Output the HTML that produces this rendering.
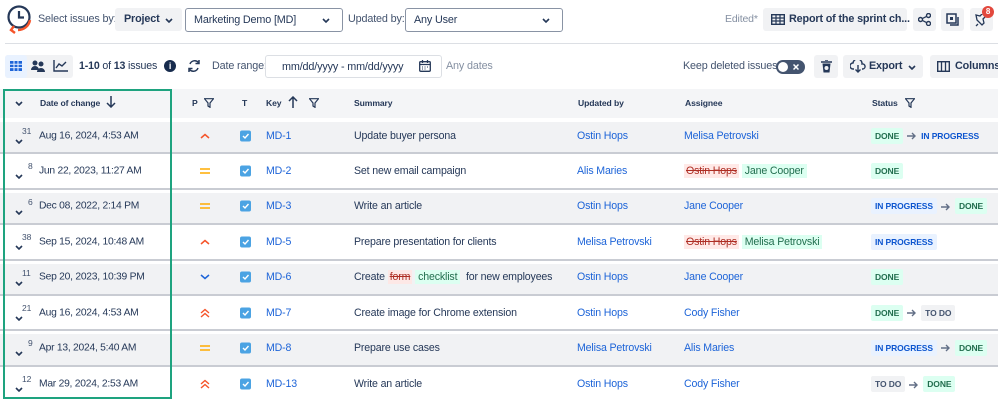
<!DOCTYPE html>
<html><head><meta charset="utf-8"><style>
*{box-sizing:border-box;margin:0;padding:0}
body{width:998px;height:400px;overflow:hidden;background:#fff;font-family:"Liberation Sans",Arial,sans-serif;font-size:10.5px;color:#253858;position:relative;letter-spacing:-0.15px}
.a{position:absolute;white-space:nowrap}
.btn{position:absolute;background:#f1f2f4;border-radius:3px}
.sel{position:absolute;border:1px solid #8993a4;border-radius:3px;background:#fff;padding:0 8px;line-height:22px;font-size:10.8px}
.sel svg,.btn svg.c{position:absolute}
.row{position:absolute;left:0;width:998px;height:35.4px;border-bottom:2px solid #c9ccd3}
.row .in{position:absolute;left:0;right:0;top:3px;bottom:0}
.g .in{background:#f1f2f4}
.row .a{top:50%;transform:translateY(-50%);font-size:10.6px}
.row .d{font-size:10.3px;letter-spacing:-0.25px}
.lnk{color:#1d64d8}
.lz{position:absolute;font-size:8.5px;color:#42526e}
.row .lz{top:7px;transform:none;font-size:8.5px}
.st{display:inline-block;font-size:8.5px;font-weight:bold;padding:3px 4px;border-radius:2px;letter-spacing:-0.1px}
.dn{background:#dcfff1;color:#216e4e}.ip{background:#e9f2ff;color:#0c55cf}.td{background:#f1f2f4;color:#44546f}
.arr{display:inline-block;margin:0 4px;vertical-align:middle}
.del{background:#ffe9e7;color:#ae2e24;text-decoration:line-through;padding:1px 2px}
.add{background:#dcfff1;color:#216e4e;padding:1px 3px}
.h{position:absolute;font-weight:bold;font-size:8.6px;color:#253858;top:98px;letter-spacing:-0.1px}
.cv{position:absolute}
.row .cv{top:20px}
</style></head><body>
<svg width="0" height="0" style="position:absolute"><defs>
<symbol id="cv" viewBox="0 0 8 5"><path d="M1 1l3 3 3-3" stroke="#253858" stroke-width="1.6" fill="none"/></symbol>
<symbol id="ar" viewBox="0 0 10 8"><path d="M0 4h8M5 1l3 3-3 3" stroke="#626f86" stroke-width="1.4" fill="none"/></symbol>
<symbol id="fl" viewBox="0 0 10 10"><path d="M.5 .7h9L6 5v4.3L4 8V5z" fill="none" stroke="#253858" stroke-width="1.2"/></symbol>
<symbol id="ck" viewBox="0 0 11 11"><rect width="11" height="11" rx="2" fill="#4ba3e3"/><path d="M3 5.5l2 2 3.5-4" stroke="#fff" stroke-width="1.4" fill="none"/></symbol>
<symbol id="hi" viewBox="0 0 10 6"><path d="M1 5l4-3.5L9 5" stroke="#f5542a" stroke-width="1.5" fill="none"/></symbol>
<symbol id="hh" viewBox="0 0 10 9"><path d="M1 4.5l4-3.5 4 3.5M1 8.5l4-3.5 4 3.5" stroke="#f5542a" stroke-width="1.4" fill="none"/></symbol>
<symbol id="md" viewBox="0 0 10 6"><path d="M0 1h10M0 5h10" stroke="#ffab00" stroke-width="1.6"/></symbol>
<symbol id="lo" viewBox="0 0 10 6"><path d="M1 1l4 3.5L9 1" stroke="#1d64d8" stroke-width="1.5" fill="none"/></symbol>
</defs></svg>
<!-- logo -->
<svg class="a" style="left:5px;top:4px" width="30" height="32" viewBox="0 0 30 32"><circle cx="14" cy="13" r="10.5" fill="none" stroke="#253858" stroke-width="2.2"/><path d="M14 7v6.5h5" fill="none" stroke="#253858" stroke-width="2.2"/><path d="M25 16c-1 6-6 10-12 10" fill="none" stroke="#f5542a" stroke-width="2.4"/><path d="M9 22l-3 4 4 3" fill="none" stroke="#f5542a" stroke-width="2.4"/></svg>
<div class="a" style="left:38px;top:13px;font-size:10.8px;color:#44546f">Select issues by:</div>
<div class="btn" style="left:115px;top:8px;width:67px;height:23px"><span class="a" style="left:9px;top:5px;font-weight:bold;font-size:10.8px">Project</span><svg class="cv" style="left:50px;top:10px" width="8" height="5"><use href="#cv"/></svg></div>
<div class="sel" style="left:185px;top:8px;width:158px;height:24px">Marketing Demo [MD]<svg style="right:12px;top:9px" width="8" height="5"><use href="#cv"/></svg></div>
<div class="a" style="left:348px;top:13px;font-size:10.8px;color:#44546f">Updated by:</div>
<div class="sel" style="left:405px;top:8px;width:158px;height:24px">Any User<svg style="right:12px;top:9px" width="8" height="5"><use href="#cv"/></svg></div>
<div class="a" style="left:725px;top:13px;font-size:10.5px;color:#8590a2">Edited*</div>
<div class="btn" style="left:763px;top:8px;width:144px;height:23px"><svg class="a" style="left:8px;top:6px" width="14" height="11"><rect x=".7" y=".7" width="12.6" height="9.6" fill="none" stroke="#253858" stroke-width="1.4"/><path d="M0 4h14M0 7h14M5 0v11M9 0v11" stroke="#253858" stroke-width="1.2"/></svg><span class="a" style="left:26px;top:5px;font-size:10.8px;font-weight:bold">Report of the sprint ch...</span></div>
<div class="btn" style="left:913px;top:8px;width:23px;height:23px"><svg class="a" style="left:5px;top:5px" width="13" height="13"><circle cx="10.5" cy="2.5" r="2" fill="none" stroke="#253858" stroke-width="1.4"/><circle cx="2.5" cy="6.5" r="2" fill="none" stroke="#253858" stroke-width="1.4"/><circle cx="10.5" cy="10.5" r="2" fill="none" stroke="#253858" stroke-width="1.4"/><path d="M4.3 5.6l4.5-2.3M4.3 7.4l4.5 2.3" stroke="#253858" stroke-width="1.3"/></svg></div>
<div class="btn" style="left:941px;top:8px;width:23px;height:23px"><svg class="a" style="left:5px;top:5px" width="13" height="13"><rect x="1" y="1" width="9" height="9" fill="none" stroke="#253858" stroke-width="1.5"/><path d="M12 4v8H4" fill="none" stroke="#253858" stroke-width="1.5"/><rect x="4" y="4" width="3" height="3" fill="#253858"/></svg></div>
<div class="btn" style="left:970px;top:8px;width:23px;height:23px"><svg class="a" style="left:5px;top:6px" width="13" height="13"><path d="M3 10l-2 2M2 6l5 5 2-2-1-4 3-3-3-3-3 3-4-1z" fill="none" stroke="#253858" stroke-width="1.3"/></svg><span class="a" style="left:12px;top:-2px;width:12px;height:12px;border-radius:6px;background:#e2483d;color:#fff;font-size:8px;font-weight:bold;text-align:center;line-height:12px">8</span></div>
<div class="a" style="left:5px;top:43px;width:993px;height:1px;background:#dcdfe4"></div>
<!-- toolbar -->
<div class="btn" style="left:5px;top:55px;width:68px;height:23px"></div>
<div class="a" style="left:5px;top:55px;width:22px;height:23px;background:#e9f2ff;border-radius:3px"></div>
<svg class="a" style="left:10px;top:61px" width="12" height="10"><rect width="12" height="10" fill="#1d64d8"/><path d="M0 3.3h12M0 6.6h12M4 0v10M8 0v10" stroke="#e9f2ff" stroke-width="1"/></svg>
<svg class="a" style="left:31px;top:60px" width="14" height="12"><circle cx="4" cy="3" r="2.5" fill="#253858"/><circle cx="10" cy="4" r="2.5" fill="#253858"/><path d="M0 10a4 4 0 0 1 8 0zM6 12a4 4 0 0 1 8 0z" fill="#253858"/></svg>
<svg class="a" style="left:53px;top:60px" width="15" height="12"><path d="M1 0v11h14" fill="none" stroke="#253858" stroke-width="1.4"/><path d="M3 8l3-4 3 2 4-4" fill="none" stroke="#253858" stroke-width="1.4"/></svg>
<div class="a" style="left:79px;top:60px;font-size:10.6px"><b>1-10</b> of <b>13</b> issues</div>
<div class="a" style="left:164px;top:60px;width:12px;height:12px;border-radius:6px;background:#172b4d;color:#fff;font-size:9px;font-weight:bold;text-align:center;line-height:12px">i</div>
<svg class="a" style="left:187px;top:59px" width="14" height="14"><path d="M3 5a5 5 0 0 1 8.5-1.5M11 9a5 5 0 0 1-8.5 1.5" fill="none" stroke="#253858" stroke-width="1.5"/><path d="M12 1v3.5H8.5M2 13V9.5h3.5" fill="none" stroke="#253858" stroke-width="1.5"/></svg>
<div class="a" style="left:212px;top:60px;font-size:10.8px;color:#44546f">Date range:</div>
<div class="a" style="left:265px;top:55px;width:177px;height:23px;border:1px solid #dcdfe4;border-radius:3px;padding:5px 0 0 16px;font-size:10.8px">mm/dd/yyyy - mm/dd/yyyy</div>
<svg class="a" style="left:419px;top:60px" width="12" height="12"><rect x=".7" y="1.7" width="10.6" height="9.6" rx="1" fill="none" stroke="#253858" stroke-width="1.3"/><path d="M1 4.5h10M3.5 0v3M8.5 0v3" stroke="#253858" stroke-width="1.3"/><path d="M3 7h1M5.5 7h1M8 7h1M3 9h1M5.5 9h1" stroke="#253858"/></svg>
<div class="a" style="left:446px;top:60px;font-size:10.8px;color:#8590a2">Any dates</div>
<div class="a" style="left:683px;top:60px;font-size:10.8px;color:#44546f">Keep deleted issues</div>
<div class="a" style="left:776px;top:60px;width:29px;height:14px;border-radius:7px;background:#44546f"><span class="a" style="left:2px;top:2px;width:10px;height:10px;border-radius:5px;background:#fff"></span><svg class="a" style="left:17px;top:4px" width="6" height="6"><path d="M.5.5l5 5M5.5.5l-5 5" stroke="#fff" stroke-width="1.5"/></svg></div>
<div class="btn" style="left:814px;top:55px;width:24px;height:23px"><svg class="a" style="left:7px;top:5px" width="11" height="13"><path d="M0 2h11M4 0h3" stroke="#253858" stroke-width="1.5"/><path d="M1.5 3.5h8l-1 9h-6z" fill="#253858"/><circle cx="5.5" cy="8" r="2" fill="#f1f2f4"/></svg></div>
<div class="btn" style="left:843px;top:55px;width:80px;height:23px"><svg class="a" style="left:7px;top:5px" width="16" height="13"><path d="M4 9H3a3 3 0 0 1 0-6 4.5 4.5 0 0 1 9 1 2.5 2.5 0 0 1 1 5h-1" fill="none" stroke="#253858" stroke-width="1.4"/><path d="M8 5v7M5.5 9.5L8 12l2.5-2.5" fill="none" stroke="#253858" stroke-width="1.4"/></svg><span class="a" style="left:26px;top:5px;font-size:10.8px;font-weight:bold">Export</span><svg class="cv" style="left:65px;top:10px" width="8" height="5"><use href="#cv"/></svg></div>
<div class="btn" style="left:930px;top:55px;width:70px;height:23px"><svg class="a" style="left:7px;top:6px" width="13" height="11"><rect x=".7" y=".7" width="11.6" height="9.6" fill="none" stroke="#253858" stroke-width="1.4"/><path d="M4.5 0v11M8.5 0v11" stroke="#253858" stroke-width="1.3"/></svg><span class="a" style="left:25px;top:5px;font-size:10.8px;font-weight:bold">Columns</span></div>
<!-- header -->
<div class="a" style="left:0;top:89px;width:998px;height:29px;background:#f4f5f7"></div>
<svg class="cv" style="left:15px;top:101px" width="8" height="5"><use href="#cv"/></svg>
<div class="h" style="left:40px">Date of change</div>
<svg class="a" style="left:106px;top:96px" width="10" height="12"><path d="M5 0v11M1 7l4 4 4-4" stroke="#253858" stroke-width="1.5" fill="none"/></svg>
<div class="h" style="left:192px">P</div>
<svg class="a" style="left:204px;top:98px" width="10" height="10"><use href="#fl"/></svg>
<div class="h" style="left:242px">T</div>
<div class="h" style="left:266px">Key</div>
<svg class="a" style="left:288px;top:96px" width="10" height="12"><path d="M5 12V1M1 5l4-4 4 4" stroke="#253858" stroke-width="1.5" fill="none"/></svg>
<svg class="a" style="left:309px;top:98px" width="10" height="10"><use href="#fl"/></svg>
<div class="h" style="left:354px">Summary</div>
<div class="h" style="left:578px">Updated by</div>
<div class="h" style="left:685px">Assignee</div>
<div class="h" style="left:872px">Status</div>
<svg class="a" style="left:905px;top:98px" width="10" height="10"><use href="#fl"/></svg>
<!-- rows -->
<div class="row g" style="top:119px"><div class="in"></div>
<span class="lz" style="left:22px">31</span><svg class="cv" style="left:15px" width="8" height="5"><use href="#cv"/></svg>
<span class="a d" style="left:39px">Aug 16, 2024, 4:53 AM</span>
<svg class="a" style="left:200px" width="10" height="6"><use href="#hi"/></svg>
<svg class="a" style="left:240px" width="11" height="11"><use href="#ck"/></svg><span class="a lnk" style="left:266px">MD-1</span>
<span class="a" style="left:354px">Update buyer persona</span><span class="a lnk" style="left:577px">Ostin Hops</span><span class="a lnk" style="left:684px">Melisa Petrovski</span>
<span class="a" style="left:871px"><span class="st dn">DONE</span><svg class="arr" width="10" height="8"><use href="#ar"/></svg><span class="st ip" style="background:none;padding-left:0">IN PROGRESS</span></span></div>
<div class="row" style="top:154.4px"><div class="in"></div>
<span class="lz" style="left:28px">8</span><svg class="cv" style="left:15px" width="8" height="5"><use href="#cv"/></svg>
<span class="a d" style="left:39px">Jun 22, 2023, 11:27 AM</span>
<svg class="a" style="left:200px" width="10" height="6"><use href="#md"/></svg>
<svg class="a" style="left:240px" width="11" height="11"><use href="#ck"/></svg><span class="a lnk" style="left:266px">MD-2</span>
<span class="a" style="left:354px">Set new email campaign</span><span class="a lnk" style="left:577px">Alis Maries</span>
<span class="a" style="left:684px"><span class="del">Ostin Hops</span> <span class="add">Jane Cooper</span></span>
<span class="a" style="left:871px"><span class="st dn">DONE</span></span></div>
<div class="row g" style="top:189.8px"><div class="in"></div>
<span class="lz" style="left:28px">6</span><svg class="cv" style="left:15px" width="8" height="5"><use href="#cv"/></svg>
<span class="a d" style="left:39px">Dec 08, 2022, 2:14 PM</span>
<svg class="a" style="left:200px" width="10" height="6"><use href="#md"/></svg>
<svg class="a" style="left:240px" width="11" height="11"><use href="#ck"/></svg><span class="a lnk" style="left:266px">MD-3</span>
<span class="a" style="left:354px">Write an article</span><span class="a lnk" style="left:577px">Ostin Hops</span><span class="a lnk" style="left:684px">Jane Cooper</span>
<span class="a" style="left:871px"><span class="st ip">IN PROGRESS</span><svg class="arr" width="10" height="8"><use href="#ar"/></svg><span class="st dn">DONE</span></span></div>
<div class="row" style="top:225.2px"><div class="in"></div>
<span class="lz" style="left:22px">38</span><svg class="cv" style="left:15px" width="8" height="5"><use href="#cv"/></svg>
<span class="a d" style="left:39px">Sep 15, 2024, 10:48 AM</span>
<svg class="a" style="left:200px" width="10" height="6"><use href="#hi"/></svg>
<svg class="a" style="left:240px" width="11" height="11"><use href="#ck"/></svg><span class="a lnk" style="left:266px">MD-5</span>
<span class="a" style="left:354px">Prepare presentation for clients</span><span class="a lnk" style="left:577px">Melisa Petrovski</span>
<span class="a" style="left:684px"><span class="del">Ostin Hops</span> <span class="add">Melisa Petrovski</span></span>
<span class="a" style="left:871px"><span class="st ip">IN PROGRESS</span></span></div>
<div class="row g" style="top:260.6px"><div class="in"></div>
<span class="lz" style="left:22px">11</span><svg class="cv" style="left:15px" width="8" height="5"><use href="#cv"/></svg>
<span class="a d" style="left:39px">Sep 20, 2023, 10:39 PM</span>
<svg class="a" style="left:200px" width="10" height="6"><use href="#lo"/></svg>
<svg class="a" style="left:240px" width="11" height="11"><use href="#ck"/></svg><span class="a lnk" style="left:266px">MD-6</span>
<span class="a" style="left:354px">Create <span class="del" style="background:#fde8e6">form</span> <span class="add">checklist</span>&nbsp; for new employees</span><span class="a lnk" style="left:577px">Ostin Hops</span><span class="a lnk" style="left:684px">Jane Cooper</span>
<span class="a" style="left:871px"><span class="st dn">DONE</span></span></div>
<div class="row" style="top:296px"><div class="in"></div>
<span class="lz" style="left:22px">21</span><svg class="cv" style="left:15px" width="8" height="5"><use href="#cv"/></svg>
<span class="a d" style="left:39px">Aug 16, 2024, 4:53 AM</span>
<svg class="a" style="left:200px" width="10" height="9"><use href="#hh"/></svg>
<svg class="a" style="left:240px" width="11" height="11"><use href="#ck"/></svg><span class="a lnk" style="left:266px">MD-7</span>
<span class="a" style="left:354px">Create image for Chrome extension</span><span class="a lnk" style="left:577px">Ostin Hops</span><span class="a lnk" style="left:684px">Cody Fisher</span>
<span class="a" style="left:871px"><span class="st dn">DONE</span><svg class="arr" width="10" height="8"><use href="#ar"/></svg><span class="st td">TO DO</span></span></div>
<div class="row g" style="top:331.4px"><div class="in"></div>
<span class="lz" style="left:28px">9</span><svg class="cv" style="left:15px" width="8" height="5"><use href="#cv"/></svg>
<span class="a d" style="left:39px">Apr 13, 2024, 5:40 AM</span>
<svg class="a" style="left:200px" width="10" height="6"><use href="#md"/></svg>
<svg class="a" style="left:240px" width="11" height="11"><use href="#ck"/></svg><span class="a lnk" style="left:266px">MD-8</span>
<span class="a" style="left:354px">Prepare use cases</span><span class="a lnk" style="left:577px">Melisa Petrovski</span><span class="a lnk" style="left:684px">Alis Maries</span>
<span class="a" style="left:871px"><span class="st ip">IN PROGRESS</span><svg class="arr" width="10" height="8"><use href="#ar"/></svg><span class="st dn">DONE</span></span></div>
<div class="row" style="top:366.8px;border-bottom:none"><div class="in"></div>
<span class="lz" style="left:22px">12</span><svg class="cv" style="left:15px" width="8" height="5"><use href="#cv"/></svg>
<span class="a d" style="left:39px">Mar 29, 2024, 2:53 AM</span>
<svg class="a" style="left:200px" width="10" height="9"><use href="#hh"/></svg>
<svg class="a" style="left:240px" width="11" height="11"><use href="#ck"/></svg><span class="a lnk" style="left:266px">MD-13</span>
<span class="a" style="left:354px">Write an article</span><span class="a lnk" style="left:577px">Ostin Hops</span><span class="a lnk" style="left:684px">Cody Fisher</span>
<span class="a" style="left:871px"><span class="st td">TO DO</span><svg class="arr" width="10" height="8"><use href="#ar"/></svg><span class="st dn">DONE</span></span></div>
<!-- highlight box -->
<div class="a" style="left:3px;top:89px;width:169px;height:310px;border:2px solid #1ea37f"></div>
</body></html>
